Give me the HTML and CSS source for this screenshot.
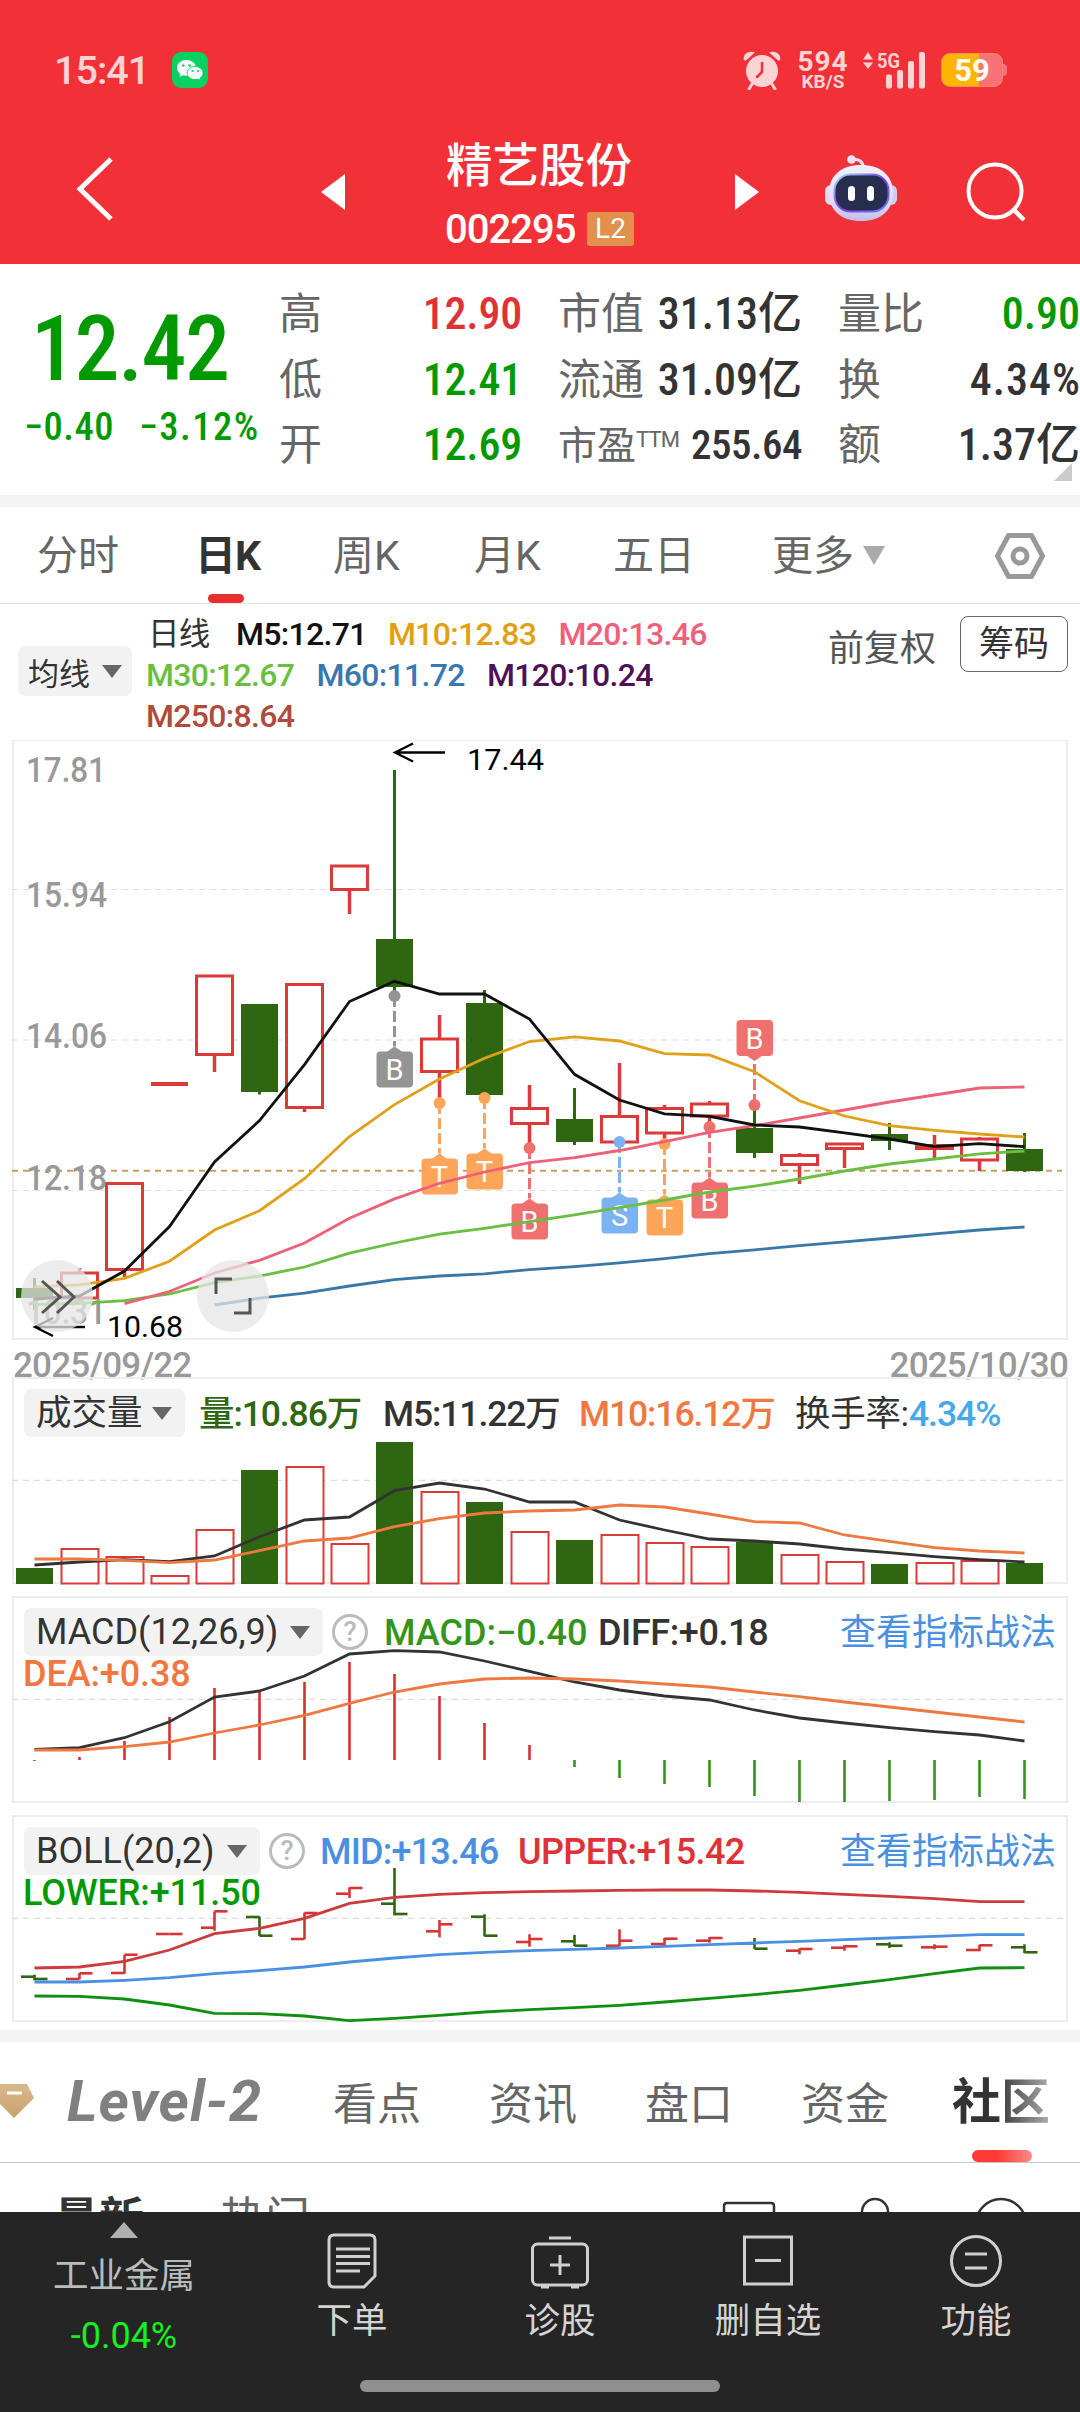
FILE: index.html
```html
<!DOCTYPE html>
<html lang="zh-CN">
<head>
<meta charset="utf-8">
<meta name="viewport" content="width=1080">
<title>精艺股份 002295</title>
<link rel="stylesheet" href="styles.css">
</head>
<body>
<div class="screen">
  <header class="top">
    <div class="status">
      <span class="clock">15:41</span>
      <svg class="wechat" width="36" height="36" viewBox="0 0 36 36"><rect width="36" height="36" rx="9" fill="#07d160"/><path d="M14.5 8C9 8 5 11.500 5 16c0 2.500 1.300 4.600 3.300 6l-.8 2.800 3.200-1.600c1.200.3 2.400.5 3.800.5C20 23.700 24 20.300 24 16S20 8 14.500 8z" fill="#fff"/><path d="M23.200 14.500c-4.600 0-8 3-8 6.600s3.400 6.500 8 6.500c1 0 2-.2 3-.5l2.600 1.400-.7-2.400c1.800-1.200 3-3 3-5 0-3.600-3.400-6.600-7.900-6.600z" fill="#fff" stroke="#07d160" stroke-width="1"/><g fill="#07d160"><circle cx="11.300" cy="13.500" r="1.300"/><circle cx="17.700" cy="13.500" r="1.300"/><circle cx="20.600" cy="19" r="1.100"/><circle cx="26" cy="19" r="1.100"/></g></svg>
      <span class="spacer"></span>
      <svg width="38" height="40" viewBox="0 0 38 40" fill="#fdd3d5"><circle cx="19" cy="21" r="16"/><path d="M.8 10C-.3 4 6 .3 12 2.500L2.600 10.800zM37.200 10C38.300 4 32 .3 26 2.500l9.400 8.300z"/><path d="M9 34l-3 5M29 34l3 5" stroke="#fdd3d5" stroke-width="3" stroke-linecap="round"/><path d="M19 13v9l-5 5" fill="none" stroke="#f23037" stroke-width="2.500" stroke-linecap="round" stroke-linejoin="round"/></svg>
      <div class="speed"><b>594</b><span>KB/S</span></div>
      <svg class="signal" width="64" height="38" viewBox="0 0 64 38" fill="#fdd3d5"><path d="M0 8.500L5 1l5 7.500zM0 11.500h10L5 18z"/><text x="14" y="16.500" font-size="21" font-weight="700" textLength="23" lengthAdjust="spacingAndGlyphs">5G</text><rect x="23" y="23.500" width="6" height="14" rx="2"/><rect x="34" y="19" width="6" height="18.500" rx="2"/><rect x="45" y="10" width="6" height="27.500" rx="2"/><rect x="56" y="1" width="6" height="36.500" rx="2"/></svg>
      <div class="battery">59</div><i class="nub"></i>
    </div>
    <nav class="nav">
      <svg width="38" height="64" viewBox="0 0 38 64"><path d="M36 2L5 32l31 30" fill="none" stroke="#fff" stroke-width="5"/></svg>
      <svg class="prev" width="24" height="36" viewBox="0 0 24 36"><path d="M24 0v36L0 18z" fill="#fff"/></svg>
      <div class="title">
        <h1>精艺股份</h1>
        <div class="code"><span>002295</span><i>L2</i></div>
      </div>
      <svg class="next" width="24" height="36" viewBox="0 0 24 36"><path d="M0 0v36l24-18z" fill="#fff"/></svg>
      <svg class="robot" width="72" height="67" viewBox="0 0 72 67">
        <defs>
          <linearGradient id="shell" x1="0" y1="0" x2="0" y2="1"><stop offset="0" stop-color="#f4f1fc"/><stop offset=".7" stop-color="#dcdaf4"/><stop offset="1" stop-color="#c3bdea"/></linearGradient>
          <linearGradient id="rim" x1="0" y1="0" x2="1" y2="1"><stop offset="0" stop-color="#9fe3f7"/><stop offset=".5" stop-color="#7a3fe0"/><stop offset="1" stop-color="#6e7df2"/></linearGradient>
        </defs>
        <path d="M27 5c7-2 11 2 11.500 8" fill="none" stroke="#e6e3f6" stroke-width="3"/><circle cx="26.500" cy="4.500" r="4.300" fill="#e6e3f6"/>
        <rect x="0" y="30" width="12" height="20" rx="6" fill="#dddaf2"/><rect x="60" y="30" width="12" height="20" rx="6" fill="#d2cdf0"/>
        <path d="M36 10C55 10 68 20 68 38S55 66 36 66 4 56 4 38 17 10 36 10z" fill="url(#shell)"/>
        <rect x="9.500" y="19.500" width="54" height="37" rx="16" fill="#272d4f" stroke="url(#rim)" stroke-width="2"/>
        <rect x="23" y="31" width="7" height="15" rx="3.500" fill="#fff"/><rect x="42" y="31" width="7" height="15" rx="3.500" fill="#fff"/>
      </svg>
      <svg class="search" width="62" height="62" viewBox="0 0 62 62" fill="none" stroke="#fff" stroke-width="4"><circle cx="30" cy="30" r="26.500"/><path d="M48 48l11 11" stroke-width="4.500"/></svg>
    </nav>
  </header>

  <section class="quote">
    <div class="last">
      <div class="price">12.42</div>
      <div class="change"><span>−0.40</span><span class="pct">−3.12%</span></div>
    </div>
    <dl class="col">
      <div><dt>高</dt><dd class="up">12.90</dd></div>
      <div><dt>低</dt><dd class="down">12.41</dd></div>
      <div><dt>开</dt><dd class="down">12.69</dd></div>
    </dl>
    <dl class="col">
      <div><dt>市值</dt><dd>31.13亿</dd></div>
      <div><dt>流通</dt><dd>31.09亿</dd></div>
      <div class="pe"><dt>市盈<sup>TTM</sup></dt><dd>255.64</dd></div>
    </dl>
    <dl class="col">
      <div><dt>量比</dt><dd class="down">0.90</dd></div>
      <div><dt>换</dt><dd class="rate">4.34%</dd></div>
      <div><dt>额</dt><dd>1.37亿</dd></div>
    </dl>
    <svg class="corner" width="18" height="18" viewBox="0 0 18 18"><path d="M18 0v18H0z" fill="#ccc"/></svg>
  </section>

  <nav class="periods">
    <span class="p1">分时</span><span class="p2 on">日K</span><span class="p3">周K</span><span class="p4">月K</span><span class="p5">五日</span><span class="p6">更多</span>
    <svg class="more" width="22" height="19" viewBox="0 0 22 19"><path d="M0 0h22L11 19z" fill="#aaa"/></svg>
    <svg class="gear" width="50" height="46" viewBox="0 0 50 46" fill="none" stroke="#999" stroke-width="5"><path d="M13.500 2.500h23L47.500 23l-11 20.500h-23L2.500 23z" stroke-linejoin="round"/><circle cx="25" cy="23" r="7"/></svg>
  </nav>

  <section class="legend">
    <div class="pick ma">均线<i class="tri"></i></div>
    <div class="ma-lines">
      <div><span class="day">日线</span><span class="w1 m5">M5:12.71</span><span class="w2 m10">M10:12.83</span><span class="m20">M20:13.46</span></div>
      <div><span class="w3 m30">M30:12.67</span><span class="w3 m60">M60:11.72</span><span class="m120">M120:10.24</span></div>
      <div><span class="m250">M250:8.64</span></div>
    </div>
    <span class="adjust">前复权</span>
    <span class="chips">筹码</span>
  </section>

  <svg class="kline" id="kline" width="1080" height="600" viewBox="0 740 1080 600"></svg>
  <div class="dates"><span>2025/09/22</span><span>2025/10/30</span></div>

  <section class="panel vol">
    <svg id="vol" width="1080" height="208" viewBox="0 1377 1080 208"></svg>
    <div class="head">
      <div class="pick">成交量<i class="tri"></i></div>
      <span class="v1">量:10.86万</span><span class="v2">M5:11.22万</span><span class="v3">M10:16.12万</span><span class="v4">换手率:<b>4.34%</b></span>
    </div>
  </section>
  <section class="panel macd">
    <svg id="macd" width="1080" height="208" viewBox="0 1596 1080 208"></svg>
    <div class="head">
      <div class="pick">MACD(12,26,9)<i class="tri"></i></div>
      <i class="help">?</i>
      <span class="c1">MACD:−0.40</span><span class="c2">DIFF:+0.18</span><a>查看指标战法</a>
    </div>
    <div class="second c3">DEA:+0.38</div>
  </section>
  <section class="panel boll">
    <svg id="boll" width="1080" height="208" viewBox="0 1815 1080 208"></svg>
    <div class="head">
      <div class="pick">BOLL(20,2)<i class="tri"></i></div>
      <i class="help">?</i>
      <span class="b1">MID:+13.46</span><span class="b2">UPPER:+15.42</span><a>查看指标战法</a>
    </div>
    <div class="second b3">LOWER:+11.50</div>
  </section>

  <nav class="tabs">
    <svg width="36" height="44" viewBox="0 0 36 44"><defs><linearGradient id="gold" x1="0" y1="0" x2="0" y2="1"><stop offset="0" stop-color="#d9b98c"/><stop offset="1" stop-color="#c9a06a"/></linearGradient></defs><path d="M-6 4h33l7 14-20 20L-6 18z" fill="url(#gold)"/><path d="M7 13h15" stroke="#fff" stroke-width="3"/></svg>
    <span class="level">Level-2</span><span class="t1">看点</span><span class="t2">资讯</span><span class="t3">盘口</span><span class="t4">资金</span><span class="t5">社区</span>
  </nav>
  <div class="sub">
    <b>最新</b><span>热门</span>
    <svg width="310" height="20" viewBox="715 2191 310 20" fill="none" stroke="#333" stroke-width="2.500"><path d="M724 2211v-6q0-3 3-3h44q3 0 3 3v6"/><circle cx="875" cy="2211" r="13"/><circle cx="1001" cy="2223" r="25"/></svg>
  </div>

  <footer class="bar">
    <div class="index"><svg width="28" height="16" viewBox="0 0 28 16"><path d="M14 0l14 16H0z" fill="#b0b0b0"/></svg><span>工业金属</span><em>-0.04%</em></div>
    <div class="act"><svg width="52" height="56" viewBox="0 0 52 56"><path d="M8 2h36q5 0 5 5v36L38 54H8q-5 0-5-5V7q0-5 5-5z"/><path d="M10 16h34M10 23.500h34M10 30.500h34M10 38h24"/></svg><span>下单</span></div>
    <div class="act"><svg width="60" height="56" viewBox="0 0 60 56"><rect x="2.500" y="11" width="55" height="41" rx="5"/><path d="M19 5h22M30 22v20M20 32h20M11 54h8M41 54h8"/></svg><span>诊股</span></div>
    <div class="act"><svg width="52" height="56" viewBox="0 0 52 56"><path d="M2.500 4h47v47h-47zM13 27.500h26"/></svg><span>删自选</span></div>
    <div class="act"><svg width="52" height="56" viewBox="0 0 52 56"><circle cx="26" cy="28" r="24.500"/><path d="M15 21h22M15 35h22"/></svg><span>功能</span></div>
    <div class="home"></div>
  </footer>
</div>
<script src="chart.js"></script>
</body>
</html>
```
FILE: styles.css
```css
* { box-sizing: border-box; }
body { margin: 0; background: #fff; font-family: Roboto, "Noto Sans CJK SC", sans-serif; font-stretch: 75%; color: #333; }
svg { display: block; flex: none; }
svg text { font-family: Roboto, "Noto Sans CJK SC", sans-serif; font-stretch: 100%; }
i, em { font-style: normal; }
.screen { width: 1080px; height: 2412px; overflow: hidden; display: flex; flex-direction: column; }
.screen > * { flex: none; }

.top { height: 264px; background: #f23037; color: #fff; }
.status { display: flex; align-items: center; height: 140px; padding: 0 73px 0 54px; }
.clock { width: 118px; font-size: 39.500px; font-weight: 500; font-stretch: 100%; letter-spacing: -1px; color: #fdd3d5; white-space: nowrap; }
.spacer { flex: 1; }
.signal { overflow: visible; }
.speed { width: 54px; margin: 0 13px 0 15px; text-align: center; color: #fdd3d5; line-height: 1; font-stretch: 100%; }
.speed b { display: block; font-size: 28px; line-height: 23px; font-weight: 700; letter-spacing: 1px; }
.speed span { display: block; font-size: 19px; line-height: 18px; font-weight: 700; }
.battery { width: 62px; height: 34px; margin-left: 14px; border: 1px solid #f98a60; border-radius: 9px; background: linear-gradient(90deg, #ffb400 61%, #f77378 61%); font-size: 31px; line-height: 33px; font-weight: 700; font-stretch: 100%; text-align: center; }
.nub { width: 4px; height: 12px; border-radius: 0 4px 4px 0; background: #f77378; }
.nav { display: flex; height: 124px; padding-left: 75px; }
.nav > svg { margin-top: 17px; }
.nav .prev { margin: 34px 0 0 208px; }
.title { width: 188px; margin-left: 101px; }
.title h1 { margin: 1px 0 0; font-size: 46.500px; line-height: 50px; font-weight: 500; white-space: nowrap; }
.code { display: flex; align-items: center; height: 50px; margin-top: 13px; font-size: 40px; font-weight: 500; font-stretch: 100%; }
.code span { width: 142px; margin-left: -1px; letter-spacing: -1px; }
.code i { width: 47px; flex: none; height: 34px; background: #e2904c; border-radius: 3px; font-size: 28px; line-height: 34px; font-weight: 400; text-align: center; }
.nav .next { margin: 34px 0 0 101px; }
.nav .robot { margin: 15px 0 0 66px; }
.nav .search { margin: 21px 0 0 68px; }

.quote { display: grid; grid-template-columns: 279px 242px 242px 242px; column-gap: 0; height: 243px; border-bottom: 12px solid #f4f4f4; position: relative; }
.quote .col { margin: 18px 0 0; }
.quote .col:nth-child(3) { margin-left: 37px; margin-right: -37px; }
.quote .col:nth-child(4) { margin-left: 75px; margin-right: -75px; }
.col div { display: flex; justify-content: space-between; height: 65.500px; line-height: 65px; align-items: baseline; font-size: 43px; white-space: nowrap; }
.col dt { color: #666; }
.col dd { margin: 0; font-weight: 500; font-size: 44px; }
.col:nth-child(2) dd { margin-right: -1px; letter-spacing: -.2px; }
.col:nth-child(3) dd { margin-right: -2px; }
.col dd.rate { letter-spacing: 1px; margin-right: -1px; }
.pe dt { font-size: 39px; }
.col .pe dd { font-size: 41px; letter-spacing: -.5px; }
.pe sup { font-size: 22px; line-height: 0; vertical-align: 12px; font-weight: 400; font-stretch: 100%; letter-spacing: -.8px; }
.col dd.up { color: #e03236; }
.down, .last { color: #090; }
.price { margin: 41px 0 0 31px; height: 90px; line-height: 90px; font-size: 90px; font-weight: 500; letter-spacing: -1.500px; }
.change { display: flex; gap: 25px; margin: 11px 0 0 24px; font-size: 38.500px; line-height: 42px; font-weight: 500; letter-spacing: .5px; white-space: nowrap; }
.pct { letter-spacing: 1.500px; }
.corner { position: absolute; right: 8px; bottom: 14px; }

.periods { display: flex; align-items: flex-start; height: 97px; padding-left: 37px; border-bottom: 1.500px solid #e5e5e5; font-size: 41px; line-height: 99px; font-stretch: 100%; color: #666; }
.periods span { white-space: nowrap; height: 96px; }
.p1 { width: 158px; } .p2 { width: 138px; } .p3 { width: 141px; } .p4 { width: 139px; } .p5 { width: 159px; } .p6 { width: 92px; }
.p2.on { position: relative; color: #333; font-weight: 700; letter-spacing: -1px; }
.p2.on::after { content: ""; position: absolute; left: 13px; bottom: 0; width: 36px; height: 9px; border-radius: 4.500px; background: #e83030; }
.more { margin-top: 39px; margin-left: -1px; }
.gear { margin: 26px 0 0 110px; }

.legend { display: flex; height: 136px; padding-left: 18px; }
.pick { display: flex; align-items: center; justify-content: space-between; background: #f2f2f2; border-radius: 7px; white-space: nowrap; color: #333; flex: none; }
.tri { border: 10px solid transparent; border-top: 13px solid #666; border-bottom: 0; }
.ma { width: 114px; height: 50px; margin-top: 42px; padding: 0 10px 0 10px; font-size: 31px; }
.ma-lines { margin: 10px 0 0 14px; width: 682px; font-size: 32px; font-weight: 500; font-stretch: 100%; letter-spacing: -.7px; line-height: 41px; height: 123px; }
.ma-lines div { display: flex; white-space: nowrap; height: 41px; }
.day { width: 90px; padding-left: 2px; font-size: 31.500px; font-weight: 400; }
.w1 { width: 152px; } .w2, .w3 { width: 170.500px; }
.m5 { color: #111; } .m10 { color: #e2a010; } .m20 { color: #f0607a; } .m30 { color: #6abf40; } .m60 { color: #3878b0; } .m120 { color: #501058; } .m250 { color: #b04a3c; }
.adjust { width: 132px; font-size: 36px; line-height: 91px; color: #555; white-space: nowrap; }
.chips { width: 108px; height: 56px; margin-top: 12px; border: 1.500px solid #666; border-radius: 8px; font-size: 35px; line-height: 55px; text-align: center; }

.dates { display: flex; justify-content: space-between; height: 37px; padding: 0 12px 0 13px; font-size: 35px; line-height: 52px; font-weight: 500; color: #999; font-stretch: 100%; letter-spacing: -.8px; }

.panel { display: grid; grid-template-rows: 60px 1fr; height: 208px; margin-bottom: 11px; font-size: 36px; font-stretch: 100%; }
.vol { font-size: 35.500px; }
.panel > svg { grid-area: 1 / 1 / 3 / 2; }
.head { grid-area: 1 / 1; display: flex; height: 48px; margin: 12px 0 0 24px; line-height: 51px; font-weight: 500; white-space: nowrap; }
.head .pick { height: 48px; padding: 0 13px 0 12px; font-weight: 400; }
.vol .pick { width: 161px; } .macd .pick { width: 299px; } .boll .pick { width: 236px; }
.vol span { letter-spacing: -1.100px; }
.v1 { margin-left: 14px; width: 184px; color: #2f6611; }
.v2 { width: 196px; } .v3 { width: 216px; color: #f07840; }
.vol .v4 { font-weight: 400; letter-spacing: -.3px; } .v4 b { font-weight: 500; color: #44a8ea; letter-spacing: -1px; }
.help { width: 36px; height: 36px; margin: 6px 0 0 9px; border: 3px solid #bbb; border-radius: 50%; font-size: 27px; line-height: 31px; text-align: center; color: #bbb; flex: none; }
.head a { margin-left: auto; margin-right: 24px; color: #4a90e2; font-weight: 400; }
.c1 { margin-left: 16px; width: 214px; color: #34941c; }
.c2 { letter-spacing: -.4px; }
.c3 { color: #f07840; }
.b1 { margin-left: 15px; width: 198px; color: #4a90e2; letter-spacing: -.8px; }
.b2 { color: #e03236; letter-spacing: -.6px; } .b3 { color: #090; }
.second { grid-area: 2 / 1; margin-left: 23px; line-height: 36px; font-weight: 500; letter-spacing: -.1px; z-index: 1; }

.tabs { display: flex; align-items: center; height: 133px; margin-top: -4px; border-top: 12px solid #f4f4f4; border-bottom: 1px solid #c8c8c8; font-size: 44px; color: #666; white-space: nowrap; }
.tabs > span { margin-top: -2px; }
.level { width: 264px; padding-left: 31px; font-size: 58px; font-weight: 700; font-style: italic; font-stretch: 100%; letter-spacing: 1px; color: #808080; }
.t1, .t2 { width: 156px; } .t3 { width: 156px; } .t4 { width: 151px; }
.tabs .t1 { margin-left: 33px; }
.tabs .t5 { position: relative; height: 120px; margin-top: 0; line-height: 122px; font-size: 49px; font-weight: 700; color: #333; -webkit-mask: linear-gradient(90deg, #000 45%, rgba(0,0,0,.4)); mask: linear-gradient(90deg, #000 45%, rgba(0,0,0,.4)); }
.t5::after { content: ""; position: absolute; left: 20px; bottom: 0; width: 60px; height: 12px; border-radius: 6px; background: #fa3a34; }
.sub { display: flex; height: 49px; overflow: hidden; padding-left: 54px; font-size: 45px; line-height: 114px; white-space: nowrap; }
.sub b { width: 166px; } .sub span { width: 495px; color: #666; }
.sub svg { margin-top: 29px; }

.bar { display: grid; grid-template-columns: 248px 208px 208px 208px 208px; height: 201px; background: #252525; color: #d4d4d4; }
.index { display: flex; flex-direction: column; align-items: center; padding-top: 10px; font-size: 35.500px; line-height: 50px; color: #bbb; }
.index span { margin-top: 13px; }
.index em { margin-top: 10px; color: #14f020; font-size: 36px; font-stretch: 100%; }
.act { display: flex; flex-direction: column; align-items: center; padding-top: 21px; font-size: 35.500px; line-height: 50px; }
.act span { margin-top: 7px; }
.act svg { fill: none; stroke: #d0d0d0; stroke-width: 3; }
.home { grid-column: 1 / -1; justify-self: center; align-self: end; width: 360px; height: 12px; margin-bottom: 21px; border-radius: 6px; background: #8f8f8f; }
```
FILE: chart.js
```javascript
const RED = '#dc3a38', GREEN = '#2f6611';
const x = i => 34.5 + 45 * i;
const line = (x1, y1, x2, y2, c, w, extra = '') =>
  `<line x1="${x1}" y1="${y1}" x2="${x2}" y2="${y2}" stroke="${c}" stroke-width="${w}" ${extra}/>`;
const poly = (ys, c, start = 0, w = 2.8) =>
  `<polyline points="${ys.map((y, k) => x(k + start) + ',' + y).join(' ')}" fill="none" stroke="${c}" stroke-width="${w}"/>`;
const frame = (y, h) => `<rect x="13" y="${y}" width="1054" height="${h}" fill="none" stroke="#ededed" stroke-width="2"/>`;
const dash = (y, c = '#dedede', w = 1.2) => line(12, y, 1066, y, c, w, 'stroke-dasharray="6 5"');
const text = (s, tx, ty, size, c, len, extra = '') =>
  `<text x="${tx}" y="${ty}" font-size="${size}" fill="${c}" textLength="${len}" lengthAdjust="spacingAndGlyphs" ${extra}>${s}</text>`;

// Daily candles: direction, body top, body bottom, high, low
const candles = [
  ['g',1288,1298,1278,1310],['r',1273,1298,1268,1299],['r',1183.5,1269.5,1183,1277],['l',1082,1086,1082,1086],
  ['r',976,1054.5,976,1072],['g',1004,1092,1004,1094.5],['r',984.5,1107.5,984,1112],['r',866,889.5,866,914],
  ['g',939,987,770,995],['r',1039,1071.5,1015,1104],['g',1003,1095,990,1097.5],['r',1108.5,1123.5,1085,1149],
  ['g',1119,1142,1088,1145],['r',1116.5,1142,1063,1142],['r',1108.5,1133,1105,1144.5],['r',1104,1116,1101,1126.5],
  ['g',1128,1153,1105,1158],['r',1155.5,1164.5,1153,1184],['r',1144,1148.5,1143,1168],['g',1134,1141,1123,1150],
  ['r',1145.5,1148.5,1135,1158.5],['r',1139,1160,1137,1171],['g',1149,1171,1133,1172]
];
let k = frame(740, 599) + dash(889.5) + dash(1040) + dash(1190.5);
k += line(12, 1170.7, 1062, 1170.7, '#c8a060', 2, 'stroke-dasharray="6 5"');
candles.forEach(([t, a, b, h, l], i) => {
  const c = t === 'g' ? GREEN : RED;
  if (t === 'g') k += line(x(i), h, x(i), l, c, 3) + `<rect x="${x(i) - 18.5}" y="${a}" width="37" height="${b - a}" fill="${c}"/>`;
  else if (t === 'l') k += `<rect x="${x(i) - 18.5}" y="${a}" width="37" height="4" fill="${c}"/>`;
  else k += line(x(i), h, x(i), a, c, 3.5) + line(x(i), b, x(i), l, c, 3.5) +
    `<rect x="${x(i) - 18}" y="${a}" width="36" height="${b - a}" fill="#fff" stroke="${c}" stroke-width="3"/>`;
});
const price = (s, y, w) => text(s, 26, y, 35, '#999', w, 'font-weight="500"');
k += price('17.81', 781.500, 80) + price('15.94', 907, 81) + price('14.06', 1048, 81) + price('12.18', 1190, 81) + price('10.31', 1324, 80);

// Trade markers: candle, letter, colour, dot y, side
[[8,'B','#949494',996],[9,'T','#ffa55a',1103],[10,'T','#ffa55a',1098],[11,'B','#f07070',1148],[13,'S','#7db2f2',1142],
 [14,'T','#ffa55a',1144],[15,'B','#f07070',1127],[16,'B','#f07070',1105,-1]].forEach(([i, s, c, y, side = 1]) => {
  const cx = x(i), box = side > 0 ? y + 55.5 : y - 85, tip = side > 0 ? box - 5 : box + 41;
  const base = side > 0 ? box + .5 : box + 35.5;
  k += `<circle cx="${cx}" cy="${y}" r="6" fill="${c}"/>` + line(cx, y, cx, tip, c, 3, 'stroke-dasharray="11 4"') +
    `<rect x="${cx - 18}" y="${box}" width="36.500" height="36" rx="4" fill="${c}"/><path d="M${cx - 8} ${base}L${cx} ${tip}L${cx + 8} ${base}z" fill="${c}"/>` +
    `<text x="${cx}" y="${box + 28.500}" font-size="29" fill="#fff" text-anchor="middle">${s}</text>`;
});
k += poly([1305,1298.2,1293.2,1286,1279.7,1276,1273.8,1269.6,1266.7,1262.9,1258.6,1253.6,1249.8,1245.6,1241.8,1238,1233.8,1230,1227], '#3878a8', 4);
k += poly([1304.5,1303.3,1300.7,1294,1282.6,1276,1267,1253.2,1243,1234.2,1228.3,1221.6,1214.9,1207.7,1200,1192,1186.2,1179,1171,1164,1159,1153.8,1151], '#6abf40');
k += poly([1303.7,1291.5,1273,1260.3,1243,1218.2,1198.9,1183.3,1172,1162.7,1157.6,1150.5,1141.6,1132.4,1125.6,1118,1110,1102,1095,1088,1087], '#ee6078', 2);
k += poly([1286.9,1284.8,1278.4,1261.2,1230,1210.7,1178.7,1136.6,1104.6,1079,1058.3,1041.5,1036.8,1041,1053.7,1055,1071.8,1100.8,1116,1125.6,1130.3,1134,1137], '#e0a018');
k += poly([1299,1296,1271,1226.6,1162,1120.6,1064.6,1001.5,981.3,994,994,1019,1074.3,1100,1113.9,1116.4,1125,1127,1132.8,1139,1146.7,1143.7,1146.7], '#111');
const arrow = (ax, ay) => `<path d="M${ax + 50} ${ay}H${ax}m18-9l-18 9 18 9" fill="none" stroke="#000" stroke-width="2.300"/>`;
k += arrow(395, 752.5) + text('17.44', 467, 770, 30, '#000', 77);
k += arrow(35, 1327) + text('10.68', 107, 1336.5, 30, '#000', 76);
// Floating buttons
k += `<circle cx="57" cy="1296" r="36" fill="#e6e6e6" fill-opacity=".75"/><circle cx="233" cy="1296" r="36" fill="#e6e6e6" fill-opacity=".75"/>` +
  `<path d="M42 1281l18 16-18 16M57 1281l17 16-17 16M216 1294v-15h16M250 1298v15h-16" fill="none" stroke="#555" stroke-width="3"/>`;
document.getElementById('kline').innerHTML = k;

// Volume
const vol = [1568,1548,1556,1575,1529,1470,1466,1543,1442,1491,1502,1531,1540,1534,1542,1546,1542,1554,1561,1564,1562,1560,1563];
let v = frame(1378, 205) + dash(1480.3);
vol.forEach((y, i) => {
  v += 'g' === candles[i][0] ? `<rect x="${x(i) - 18.5}" y="${y}" width="37" height="${1584 - y}" fill="${GREEN}"/>`
    : `<rect x="${x(i) - 18}" y="${y + 1}" width="37" height="${1582.5 - y}" fill="#fff" stroke="${RED}" stroke-width="2"/>`;
});
v += poly([1565,1562,1559.7,1561.7,1556,1536.7,1520,1517,1490.7,1483,1489,1502,1502,1520,1530,1539,1541,1544,1549,1552.7,1556.7,1559.7,1562], '#333');
v += poly([1559,1559,1560.3,1562.7,1560,1550.7,1541,1538,1526.7,1518.7,1513,1511,1510,1505,1507,1514,1521.7,1523,1535,1541.3,1547.7,1551,1553], '#ee7840');
document.getElementById('vol').innerHTML = v;

// MACD
const hist = [1761,1757,1741,1717,1688,1691,1682,1662,1674,1696,1723,1745,1767,1778,1784,1787,1796,1802,1802,1801,1800,1797,1799];
let m = frame(1597, 205) + dash(1699.3);
hist.forEach((y, i) => { m += line(x(i), 1760, x(i), y, i && y < 1760 ? '#d43030' : '#34941c', 2.6); });
m += poly([1749.3,1747.7,1737.7,1721.7,1697,1691,1676,1654,1650.7,1652,1661,1671.3,1682,1690,1696,1700,1710,1718,1723,1727.7,1731.7,1735,1741], '#333');
m += poly([1750,1750,1746.7,1742,1733,1725,1715.3,1703.3,1692,1684,1679,1678,1679,1681,1684,1687,1692,1696.7,1702,1707,1712,1717,1722], '#ee7840');
document.getElementById('macd').innerHTML = m;

// BOLL bars: open, close, high, low
const bars = [[1976.7,1979,1974.7,1980.3],[1979,1973.3,1973,1979.3],[1973,1954.7,1954.7,1973.7],[1934,1934,1934,1934],[1927.7,1911.3,1911.3,1930.7],
  [1917,1935.7,1916.7,1936],[1939,1913,1912.7,1939.3],[1893.7,1888,1887.3,1898],[1903.7,1914,1868,1915.3],[1931.3,1924.3,1920,1937.3],
  [1916.7,1935.7,1914.3,1936.3],[1942,1939,1934.3,1946.7],[1941.3,1945.7,1935,1946],[1945.7,1940.7,1929.3,1946],[1944,1938.7,1938,1945.3],
  [1940.7,1938,1937,1942.7],[1943.3,1948.7,1938,1949],[1950.7,1949,1948.3,1954.3],[1947.7,1946.3,1945,1950.7],[1944.3,1945.7,1942.3,1948],
  [1947.3,1946.7,1944.3,1949.3],[1950,1945.3,1944.7,1951.3],[1947.3,1952.3,1944.3,1953]];
let b = frame(1816, 205) + dash(1918.3);
bars.forEach(([o, c, h, l], i) => {
  const col = candles[i][0] === 'g' ? GREEN : '#d83434';
  b += line(x(i), h, x(i), l, col, 2.6) + line(x(i) - 13.5, o, x(i), o, col, 2.6) + line(x(i), c, x(i) + 13, c, col, 2.6);
});
b += poly([1968,1967,1961.3,1950,1933.7,1928.3,1918.3,1903.3,1897.3,1894.3,1892.7,1891.7,1891,1890.3,1890,1890,1891,1892.3,1894.3,1896.3,1898.7,1901.7,1901.7], '#cc3c3c');
b += poly([1982,1982,1980.3,1977.7,1973.7,1970.7,1967,1962,1958,1954.7,1952.3,1950.7,1949.3,1948,1946.3,1944.7,1943,1941.3,1939.7,1938,1936.3,1934.7,1934.7], '#4a90e2');
b += poly([1996,1996.3,1999,2005,2013.3,2013.7,2016,2020.7,2018.3,2015.3,2012,2009.7,2007.7,2005.3,2002,1998.3,1994.7,1990.3,1985,1979.7,1973.7,1968,1967.7], '#109010');
document.getElementById('boll').innerHTML = b;
```
